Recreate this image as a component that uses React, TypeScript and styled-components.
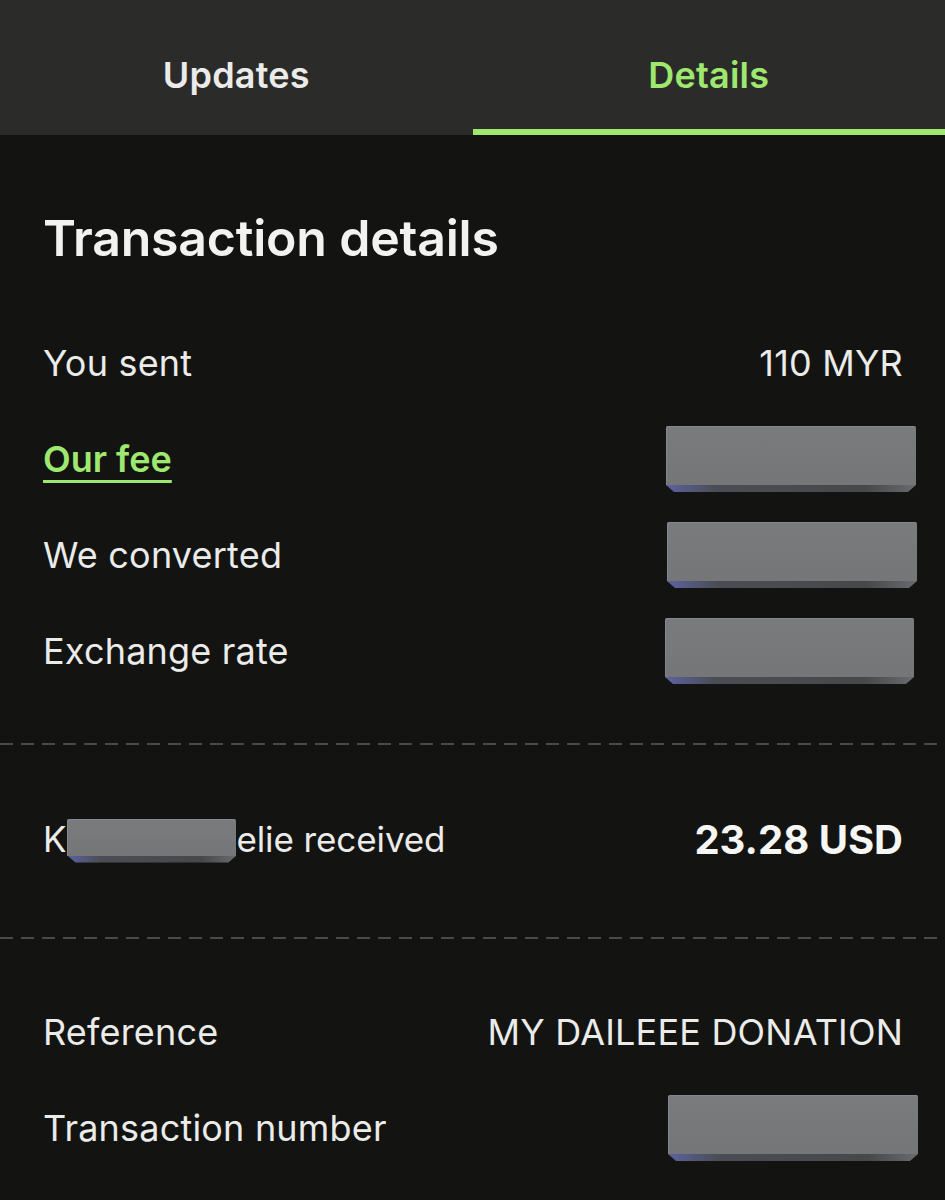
import * as React from 'react';
import styled, { createGlobalStyle } from 'styled-components';

const GlobalStyle = createGlobalStyle`
  html, body {
    margin: 0;
    padding: 0;
    background: #131412;
  }
  body {
    font-family: Inter, 'Noto Sans', 'Liberation Sans', sans-serif;
    color: #ebebe9;
    -webkit-font-smoothing: antialiased;
  }
`;

const Page = styled.div`
  width: 945px;
  min-height: 1200px;
  background: #131412;
  overflow: hidden;
`;

const TabBar = styled.div`
  display: flex;
  height: 135px;
  background: #2b2c2a;
`;

const Tab = styled.div<{ active?: boolean }>`
  flex: 1;
  display: flex;
  align-items: center;
  justify-content: center;
  box-sizing: border-box;
  padding-top: ${(props) => (props.active ? '20px' : '14px')};
  padding-bottom: 0;
  font-size: 36px;
  font-weight: 600;
  letter-spacing: 0.2px;
  color: ${(props) => (props.active ? '#9fe870' : '#ebebe9')};
  border-bottom: ${(props) => (props.active ? '6px solid #9fe870' : 'none')};
`;

const Section = styled.section<{ top?: number; bottom?: number }>`
  padding: ${(props) => props.top ?? 46}px 42px ${(props) => props.bottom ?? 46}px 43px;
`;

const Title = styled.h1`
  margin: 27px 0 47px;
  font-size: 50px;
  line-height: 60px;
  font-weight: 600;
  color: #f2f2f0;
  letter-spacing: -0.2px;
`;

const Row = styled.div`
  display: flex;
  align-items: center;
  justify-content: space-between;
  height: 96px;
`;

const Label = styled.span`
  font-size: 36px;
  font-weight: 400;
  color: #ebebe9;
  white-space: nowrap;
  letter-spacing: 0.2px;
`;

const FeeLink = styled.span`
  font-size: 36px;
  font-weight: 600;
  color: #9fe870;
  text-decoration: underline;
  text-decoration-thickness: 3px;
  text-underline-offset: 8px;
`;

const Value = styled.span<{ strong?: boolean }>`
  font-size: ${(props) => (props.strong ? '40px' : '36px')};
  font-weight: ${(props) => (props.strong ? 700 : 400)};
  color: ${(props) => (props.strong ? '#f6f6f4' : '#ebebe9')};
  white-space: nowrap;
  letter-spacing: ${(props) => (props.strong ? '0' : '0.2px')};
`;

const Redacted = styled.span<{ w: number; h: number; shift?: number }>`
  position: relative;
  display: inline-block;
  width: ${(props) => props.w}px;
  height: ${(props) => props.h}px;
  margin-right: ${(props) => -(props.shift ?? 0)}px;
  margin-bottom: 7px;
  background: linear-gradient(180deg, #7a7b7c 0%, #757677 100%);
  border-radius: 2px 2px 0 0;
  box-shadow: inset 1px 1px 0 rgba(150, 160, 200, 0.35);
  vertical-align: middle;

  &::after {
    content: '';
    position: absolute;
    left: 0;
    right: 0;
    bottom: -7px;
    height: 7px;
    background: linear-gradient(90deg, #5b63a0 0%, #4b4d55 20%, #47484a 80%, #6a6b70 100%);
    clip-path: polygon(0 0, 100% 0, calc(100% - 8px) 100%, 8px 100%);
  }
`;

const Divider = styled.div`
  height: 2px;
  background: repeating-linear-gradient(
    90deg,
    #4a4b49 0,
    #4a4b49 13px,
    transparent 13px,
    transparent 21px
  );
`;

const NameLabel = styled(Label)`
  display: inline-flex;
  align-items: center;
  font-size: 35px;
  letter-spacing: -0.1px;
`;

const NameMask = styled(Redacted)`
  margin: 0 0 0 1px;
  position: relative;
  top: -2px;
`;

export default function App() {
  return (
    <>
      <GlobalStyle />
      <Page>
        <TabBar>
          <Tab>Updates</Tab>
          <Tab active>Details</Tab>
        </TabBar>

        <Section top={46} bottom={44}>
          <Title>Transaction details</Title>
          <Row>
            <Label>You sent</Label>
            <Value>110 MYR</Value>
          </Row>
          <Row>
            <FeeLink>Our fee</FeeLink>
            <Redacted w={250} h={59} shift={13} />
          </Row>
          <Row>
            <Label>We converted</Label>
            <Redacted w={250} h={59} shift={14} />
          </Row>
          <Row>
            <Label>Exchange rate</Label>
            <Redacted w={249} h={59} shift={11} />
          </Row>
        </Section>

        <Divider />

        <Section top={46} bottom={50}>
          <Row>
            <NameLabel>
              K<NameMask w={169} h={37} />elie received
            </NameLabel>
            <Value strong>23.28 USD</Value>
          </Row>
        </Section>

        <Divider />

        <Section top={45} bottom={40}>
          <Row>
            <Label>Reference</Label>
            <Value>MY DAILEEE DONATION</Value>
          </Row>
          <Row>
            <Label>Transaction number</Label>
            <Redacted w={250} h={59} shift={15} />
          </Row>
        </Section>
      </Page>
    </>
  );
}
